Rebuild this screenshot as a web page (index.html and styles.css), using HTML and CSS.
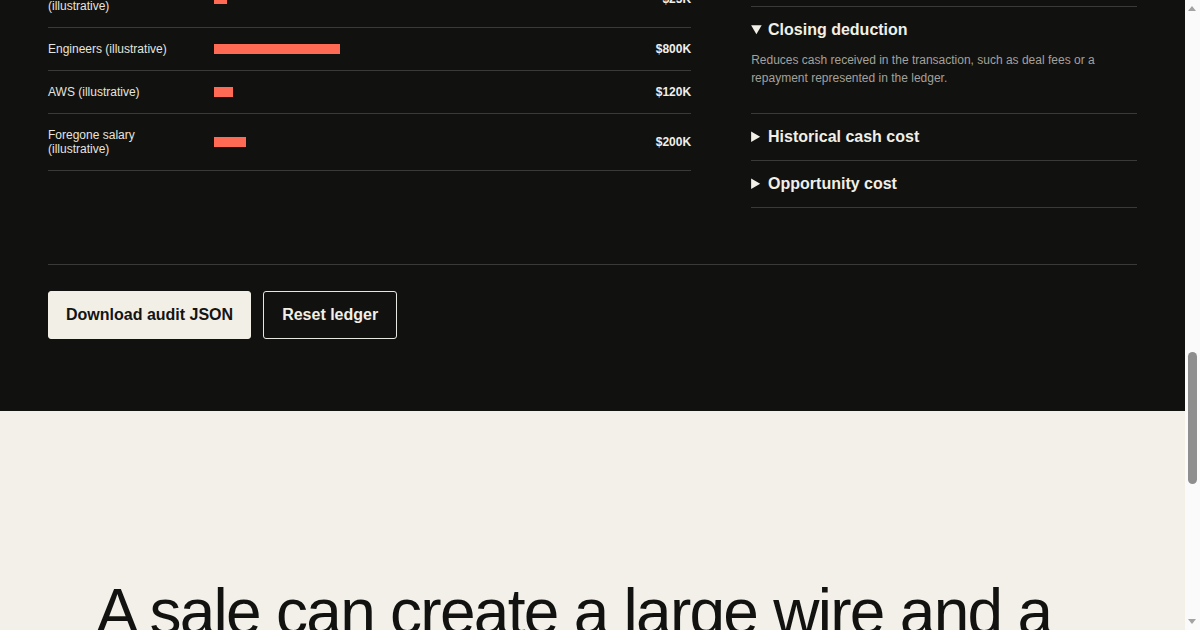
FILE: index.html
```html
<!DOCTYPE html>
<html lang="en">
<head>
<meta charset="utf-8">
<title>Exit ledger</title>
<link rel="stylesheet" href="styles.css">
</head>
<body>
<section class="ledger-section">
  <div class="ledger-grid">
    <div class="ledger">
      <div class="row">
        <span class="label">Incorporation and legal (illustrative)</span>
        <span class="track"><span class="bar" style="width:13px"></span></span>
        <span class="value">$25K</span>
      </div>
      <div class="row">
        <span class="label">Engineers (illustrative)</span>
        <span class="track"><span class="bar" style="width:126px"></span></span>
        <span class="value">$800K</span>
      </div>
      <div class="row">
        <span class="label">AWS (illustrative)</span>
        <span class="track"><span class="bar" style="width:19px"></span></span>
        <span class="value">$120K</span>
      </div>
      <div class="row">
        <span class="label">Foregone salary (illustrative)</span>
        <span class="track"><span class="bar" style="width:32px"></span></span>
        <span class="value">$200K</span>
      </div>
    </div>

    <div class="glossary">
      <details class="term" open>
        <summary>Closing deduction</summary>
        <p>Reduces cash received in the transaction, such as deal fees or a repayment represented in the ledger.</p>
      </details>
      <details class="term">
        <summary>Historical cash cost</summary>
        <p>Cash actually spent to build the company before the sale.</p>
      </details>
      <details class="term">
        <summary>Opportunity cost</summary>
        <p>Income given up by working on the company instead of elsewhere.</p>
      </details>
    </div>
  </div>

  <div class="actions">
    <button class="btn btn-solid" type="button">Download audit JSON</button>
    <button class="btn btn-outline" type="button">Reset ledger</button>
  </div>
</section>

<section class="story">
  <h2 class="story-title">A sale can create a large wire and a</h2>
</section>

<!-- window scrollbar strip -->
<div class="scrollbar" aria-hidden="true">
  <span class="scroll-arrow up"></span>
  <span class="scroll-thumb"></span>
  <span class="scroll-arrow down"></span>
</div>
</body>
</html>
```

FILE: styles.css
```css
* {
  box-sizing: border-box;
}

html,
body {
  margin: 0;
  padding: 0;
}

body {
  margin-right: 15px;
  font-family: "Liberation Sans", Arial, sans-serif;
  background: #f2f0e8;
  color: #121210;
}

/* Dark ledger block */
.ledger-section {
  background: #111110;
  color: #ebe9e3;
  padding: 0 48px 72px;
}

.ledger-grid {
  display: grid;
  grid-template-columns: 5fr 3fr;
  column-gap: 60px;
  align-items: start;
  margin-top: -29px;
}

.row {
  display: grid;
  grid-template-columns: 150px 1fr auto;
  column-gap: 16px;
  align-items: center;
  padding: 14px 0;
  border-bottom: 1px solid #3a3a37;
  font-size: 12px;
  line-height: 14px;
}

.label {
  color: #e6e4de;
}

.track {
  display: block;
  height: 10px;
}

.bar {
  display: block;
  height: 10px;
  background: #ff6a55;
}

.value {
  font-weight: 700;
  color: #f0eee8;
  text-align: right;
}

/* Glossary column */
.glossary {
  margin-top: 35px;
  border-top: 1px solid #3a3a37;
}

.term {
  border-bottom: 1px solid #3a3a37;
  padding: 14px 0;
}

.term summary {
  font-size: 16px;
  line-height: 18px;
  font-weight: 700;
  color: #f2efe6;
  cursor: pointer;
}

.term p {
  margin: 12px 0 12px;
  font-size: 12px;
  line-height: 18px;
  color: #a3a19b;
}

/* Buttons row */
.actions {
  display: flex;
  gap: 12px;
  margin-top: 56px;
  padding-top: 26px;
  border-top: 1px solid #3a3a37;
}

.btn {
  height: 48px;
  padding: 0 17px;
  font-family: "Liberation Sans", Arial, sans-serif;
  font-size: 16px;
  font-weight: 700;
  border-radius: 3px;
  cursor: pointer;
}

.btn-solid {
  background: #f2efe6;
  color: #141412;
  border: 1px solid #f2efe6;
}

.btn-outline {
  padding: 0 18px;
  background: transparent;
  color: #f2efe6;
  border: 1px solid #e8e6e0;
}

/* Light story block */
.story {
  background: #f2f0e8;
  padding: 168px 96px 400px;
}

.story-title {
  margin: 0;
  font-size: 64px;
  line-height: 1.05;
  font-weight: 400;
  letter-spacing: -0.027em;
  color: #121210;
}

/* Window scrollbar */
.scrollbar {
  position: fixed;
  top: 0;
  right: 0;
  width: 15px;
  height: 100vh;
  background: #fafafa;
}

.scroll-thumb {
  position: absolute;
  left: 3px;
  top: 352px;
  width: 9px;
  height: 132px;
  border-radius: 5px;
  background: #8e8e8e;
}

.scroll-arrow {
  position: absolute;
  left: 3px;
  width: 0;
  height: 0;
  border-left: 4.5px solid transparent;
  border-right: 4.5px solid transparent;
}

.scroll-arrow.up {
  top: 6px;
  border-bottom: 5px solid #a3a3a3;
}

.scroll-arrow.down {
  bottom: 6px;
  border-top: 5px solid #a3a3a3;
}
```
